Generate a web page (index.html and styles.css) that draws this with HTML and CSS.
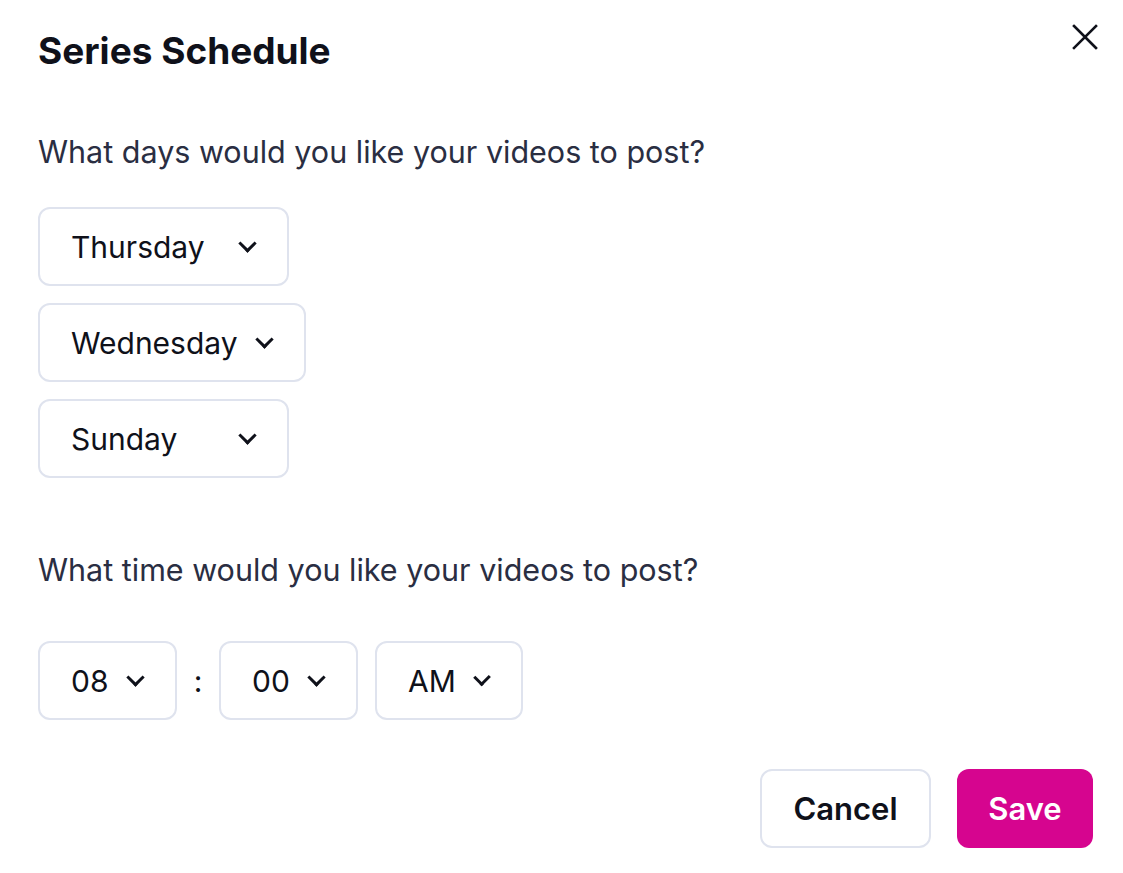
FILE: index.html
```html
<!DOCTYPE html>
<html lang="en">
<head>
    <meta charset="UTF-8">
    <title>Series Schedule</title>
    <link rel="stylesheet" href="styles.css">
</head>
<body>
    <section class="modal">
        <header class="modal-header">
            <h1 class="title">Series Schedule</h1>
            <button class="close" aria-label="Close">
                <svg width="26" height="26" viewBox="0 0 26 26"><path d="M2 2 L24 24 M24 2 L2 24" stroke="#0f111a" stroke-width="2.6" stroke-linecap="square" fill="none"/></svg>
            </button>
        </header>

        <p class="question">What days would you like your videos to post?</p>
        <div class="days">
            <div class="select day">Thursday <span class="chev"></span></div>
            <div class="select day">Wednesday <span class="chev"></span></div>
            <div class="select day">Sunday <span class="chev"></span></div>
        </div>

        <p class="question second">What time would you like your videos to post?</p>
        <div class="time">
            <div class="select small">08 <span class="chev"></span></div>
            <span class="colon">:</span>
            <div class="select small">00 <span class="chev"></span></div>
            <div class="select small ampm">AM <span class="chev"></span></div>
        </div>

        <div class="actions">
            <button class="btn cancel">Cancel</button>
            <button class="btn save">Save</button>
        </div>
    </section>
</body>
</html>
```
FILE: styles.css
```css
* {
    margin: 0;
    padding: 0;
    box-sizing: border-box;
    font-family: Inter, "Noto Sans", sans-serif;
}
body {
    background: #fff;
    color: #0f111a;
}
.modal {
    width: 1123px;
    padding: 24px 30px 0 38px;
}
.modal-header {
    display: flex;
    justify-content: space-between;
    align-items: flex-start;
    height: 62px;
}
.title {
    font-size: 37px;
    font-weight: 700;
    line-height: 54px;
}
.close {
    background: none;
    border: none;
    margin-right: -5px;
}
.question {
    font-size: 30.5px;
    color: #2a2e42;
    line-height: 40px;
    margin-top: 46px;
}
.question.second {
    margin-top: 72px;
}
.days {
    display: flex;
    flex-direction: column;
    align-items: flex-start;
    gap: 17px;
    margin-top: 35px;
}
.select {
    display: flex;
    align-items: center;
    justify-content: space-between;
    height: 79px;
    border: 2px solid #dfe3ee;
    border-radius: 12px;
    padding: 0 29px 0 31px;
    font-size: 30px;
    color: #0f111a;
}
.day {
    min-width: 251px;
}
.chev {
    width: 13px;
    height: 13px;
    border-right: 3px solid #0f111a;
    border-bottom: 3px solid #0f111a;
    transform: rotate(45deg);
    margin: -6px 4px 0 20px;
}
.time {
    display: flex;
    align-items: center;
    margin-top: 51px;
}
.small {
    width: 139px;
}
.colon {
    font-size: 30px;
    width: 42px;
    text-align: center;
}
.ampm {
    width: 148px;
    margin-left: 17px;
}
.actions {
    display: flex;
    justify-content: flex-end;
    gap: 26px;
    margin-top: 49px;
}
.btn {
    height: 79px;
    border-radius: 12px;
    font-size: 31px;
    font-weight: 600;
    cursor: pointer;
}
.cancel {
    width: 171px;
    background: #fff;
    border: 2px solid #dfe3ee;
    color: #0f111a;
}
.save {
    width: 136px;
    background: #d6058f;
    border: none;
    color: #fff;
}
```
